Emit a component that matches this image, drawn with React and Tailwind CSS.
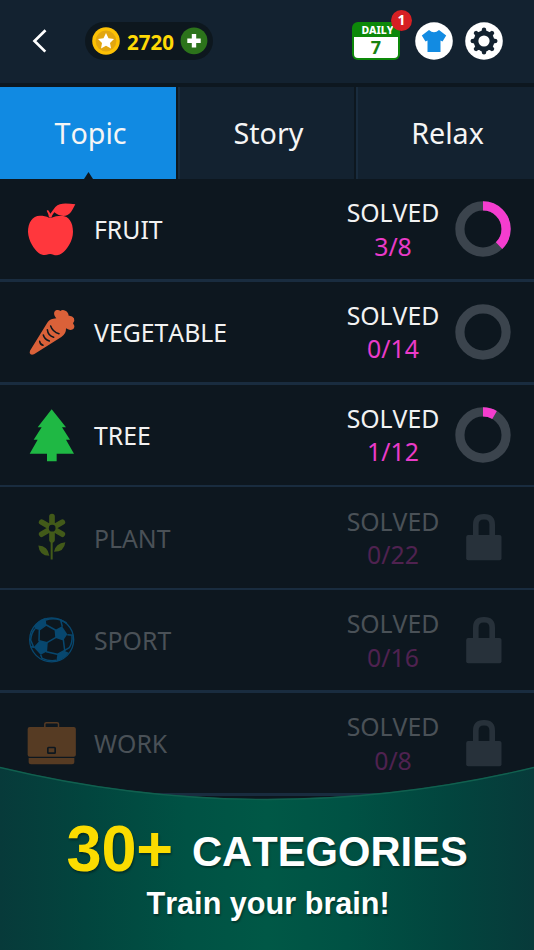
import { useState } from "react";

const tabs = ["Topic", "Story", "Relax"];

function Apple() {
  return (
    <svg viewBox="81 48 150 168" className="h-14 w-[50px]" fill="#ff373d">
      <path d="M147 98C139 93 130 92 120 92C97 92 84 113 84 141C85 168 103 194 116 204C126 212 138 211 145 208Q152 206 160 209C168 212 178 211 186 205C201 193 219 168 219 140C219 112 207 93 185 92C173 92 162 94 155 98Z" />
      <path d="M147 97Q146 87 140 77L144 75Q149 81 151 86Q160 74 166 66C180 51 203 55 226 58Q219 72 213 81C201 97 180 96 163 82Q157 89 154 98Z" />
    </svg>
  );
}

function Carrot() {
  return (
    <svg viewBox="81 357 150 168" className="h-14 w-[50px]">
      <path
        fill="#da6139"
        d="M90 497L140 416Q147 403 160 401L169 400C160 390 160 378 170 375Q178 374 181 378Q187 373 196 377Q205 381 206 392Q217 391 222 400Q225 408 219 415Q225 422 222 430Q215 438 204 433L198 430Q199 446 184 456L102 508Q92 512 89 504Z"
      />
      <g fill="none" stroke="#0d171f" strokeWidth="4.5" strokeLinecap="round">
        <path d="M152 423Q158 441 177 446" />
        <path d="M142 434Q144 452 161 457" />
        <path d="M130 450Q133 463 148 468" />
        <path d="M119 469Q120 478 129 481" />
      </g>
    </svg>
  );
}

function Tree() {
  return (
    <svg viewBox="81 65 150 168" className="h-14 w-[50px]" fill="#1fb844">
      <path d="M155 72L198 126H186L210 163H198L222 205H170V228H141V205H89L113 163H101L125 126H113Z" />
    </svg>
  );
}

function Plant() {
  return (
    <svg viewBox="81 373.5 150 168" className="h-14 w-[50px]">
      <g stroke="#92be12" strokeWidth="17" strokeLinecap="round">
        <path d="M156 396V466M125 413L187 449M187 413L125 449" />
      </g>
      <path d="M152 460H158V525H152Z" fill="#92be12" />
      <circle cx="156.5" cy="431" r="10" fill="#0d171f" />
      <path d="M115 483Q144 484 148 514Q118 514 115 483ZM196 473Q166 476 162 502Q193 502 196 473Z" fill="#92be12" />
    </svg>
  );
}

function Ball() {
  return (
    <svg viewBox="81 82 150 168" className="h-14 w-[50px]">
      <circle cx="155" cy="165.5" r="66" fill="none" stroke="#0090e6" strokeWidth="4" />
      <g fill="#0090e6">
        <path d="M103 125Q114 106 137 99L139 120L118 136L105 132Z" />
        <path d="M165 136L186 125L202 149L191 165L168 158Z" />
        <path d="M118 169L141 174L139 201L122 210L101 188Z" />
        <path d="M172 209L193 198L206 204Q194 222 169 231Z" />
      </g>
      <g fill="none" stroke="#0090e6" strokeWidth="4.5" strokeLinejoin="round">
        <path d="M118 136L139 121L166 136L168 158L141 174L117 168Z" />
        <path d="M168 158L190 165L194 197L172 209L139 201L141 174" />
        <path d="M137 106Q160 98 182 106L187 126M182 106L200 115" />
        <path d="M202 150L219 152M194 197L208 189Q218 174 216 153" />
        <path d="M105 132Q94 144 92 166L101 188L92 186" />
        <path d="M122 210L126 221Q148 231 169 227" />
      </g>
    </svg>
  );
}

function Briefcase() {
  return (
    <svg viewBox="81 390 150 168" className="h-14 w-[50px]">
      <path d="M134.5 428V417Q134.5 413 139 413H171Q175.5 413 175.5 417V428" fill="none" stroke="#c4712b" strokeWidth="4.5" />
      <rect x="83" y="426" width="144.5" height="89" rx="6" fill="#c4712b" />
      <path d="M86 519H223V531Q223 538 216 538H93Q86 538 86 531Z" fill="#c4712b" />
      <rect x="143.5" y="487.5" width="22" height="17" rx="2" fill="none" stroke="#0d171f" strokeWidth="5" />
    </svg>
  );
}

function Ring({ value }) {
  const length = 2 * Math.PI * 23.1;
  return (
    <svg viewBox="0 0 56 56" className="size-14">
      <circle cx="28" cy="28" r="23.1" fill="none" stroke="#3b444d" strokeWidth="9.2" />
      {value > 0 && (
        <circle
          cx="28"
          cy="28"
          r="23.1"
          fill="none"
          stroke="#f53dcf"
          strokeWidth="9.2"
          strokeDasharray={`${length * value} ${length}`}
          transform="rotate(-90 28 28)"
        />
      )}
    </svg>
  );
}

function Lock() {
  return (
    <svg viewBox="0 0 56 56" className="size-14">
      <path d="M20.8 27V15.6Q20.8 7.8 28.6 7.8H29.4Q37.2 7.8 37.2 15.6V27" fill="none" stroke="#27313a" strokeWidth="5.6" />
      <rect x="11.2" y="26" width="35.3" height="25.3" rx="2" fill="#27313a" />
    </svg>
  );
}

const categories = [
  { name: "FRUIT", solved: 3, total: 8, icon: Apple },
  { name: "VEGETABLE", solved: 0, total: 14, icon: Carrot },
  { name: "TREE", solved: 1, total: 12, icon: Tree },
  { name: "PLANT", solved: 0, total: 22, icon: Plant, locked: true },
  { name: "SPORT", solved: 0, total: 16, icon: Ball, locked: true },
  { name: "WORK", solved: 0, total: 8, icon: Briefcase, locked: true },
];

function Header() {
  return (
    <header className="flex h-[83px] items-center bg-[#132230] pr-[31px] pb-px pl-[32px]">
      <button className="h-6 w-4">
        <svg viewBox="0 0 16 24" className="h-6 w-4" fill="none" stroke="#fff" strokeWidth="2.7">
          <path d="M13.5 1.2L2.5 12L13.3 22.6" />
        </svg>
      </button>

      <div className="ml-[37px] flex h-[38px] w-32 items-center rounded-full bg-[#0d171e] pl-[7px]">
        <svg viewBox="0 0 28 28" className="size-7">
          <circle cx="14" cy="14" r="13.8" fill="#fdc105" />
          <circle cx="14" cy="14" r="10.4" fill="#e2a60f" />
          <path d="M14 6L16.5 11.2L22 12L18 15.9L19 21.4L14 18.8L9 21.4L10 15.9L6 12L11.5 11.2Z" fill="#fff" />
        </svg>
        <span className="mt-[2px] ml-[7px] w-[54px] text-[20.5px] leading-none font-bold text-[#ffd905]">2720</span>
        <svg viewBox="0 0 28 28" className="-ml-px size-7">
          <circle cx="14" cy="13.8" r="13.4" fill="#2c731b" />
          <path d="M14 7.1V20.5M7.3 13.8H20.7" stroke="#fff" strokeWidth="4.4" />
        </svg>
      </div>

      <div className="ml-auto flex items-center">
        <div className="relative flex h-[38px] w-12 flex-col rounded-[6px] bg-[#0d8809] p-[2px] text-center font-bold">
          <span className="h-[13px] pl-[3px] text-[10.5px] leading-[13px] font-extrabold text-white">DAILY</span>
          <span className="flex-1 rounded-b-[4px] bg-white text-[18px] leading-[21px] text-[#17820f]">7</span>
          <span className="absolute -top-[12px] -right-[12px] size-[21px] rounded-full bg-[#d62023] text-[14px] leading-[20px] text-white">
            1
          </span>
        </div>
        <svg viewBox="0 0 38 38" className="ml-[15px] size-[38px]">
          <circle cx="19" cy="19" r="18.8" fill="#fff" />
          <path d="M14 8Q19 12.5 24 8L31.2 13.6L27.5 19.5L25.5 18.5V30H12.5V18.5L10.5 19.5L6.8 13.6Z" fill="#128be2" />
        </svg>
        <svg viewBox="0 0 38 38" className="ml-3 size-[38px]">
          <circle cx="19" cy="19" r="18.8" fill="#fff" />
          <g fill="#132230">
            <circle cx="19" cy="19" r="10.4" />
            {[0, 45, 90, 135].map((angle) => (
              <path key={angle} d="M17.2 6.2Q19 4.7 20.8 6.2L21.8 10V28L20.8 31.8Q19 33.3 17.2 31.8L16.2 28V10Z" transform={`rotate(${angle} 19 19)`} />
            ))}
          </g>
          <circle cx="19" cy="19" r="5.6" fill="#fff" />
        </svg>
      </div>
    </header>
  );
}

function CategoryRow({ category }) {
  const { name, solved, total, icon: Icon, locked } = category;
  return (
    <li className="flex h-[102.8px] flex-col">
      <div className="flex flex-1 items-center pr-[23px] pl-[27px]">
        <div className={locked ? "opacity-40" : ""}>
          <Icon />
        </div>
        <p className={`mt-px ml-[17px] text-[24.8px] leading-none ${locked ? "text-[#4a5157]" : "text-[#f2f2f2]"}`}>{name}</p>
        <div className="mt-px ml-auto w-[100px] text-center text-[24.8px] leading-[33.4px]">
          <p className={locked ? "text-[#4a5157]" : "text-[#f2f2f2]"}>SOLVED</p>
          <p className={locked ? "text-[#4f2250]" : "text-[#ea3bc9]"}>
            {solved}/{total}
          </p>
        </div>
        <div className="ml-3">{locked ? <Lock /> : <Ring value={solved / total} />}</div>
      </div>
      <div className="h-[2.6px] bg-[#192c3f]" />
    </li>
  );
}

function Banner() {
  return (
    <div className="absolute inset-x-0 bottom-0 h-[184px] font-['Liberation_Sans',Arial,sans-serif] font-bold text-white">
      <svg viewBox="0 0 534 184" className="absolute inset-0 h-full w-full">
        <defs>
          <linearGradient id="banner">
            <stop offset="0" stopColor="#073a3a" />
            <stop offset="0.16" stopColor="#02453e" />
            <stop offset="0.35" stopColor="#005244" />
            <stop offset="0.5" stopColor="#005846" />
            <stop offset="0.65" stopColor="#005244" />
            <stop offset="0.84" stopColor="#02453e" />
            <stop offset="1" stopColor="#073a3a" />
          </linearGradient>
        </defs>
        <path d="M0 1Q267 65 534 1V184H0Z" fill="url(#banner)" />
        <path d="M0 1.5Q267 65.5 534 1.5" fill="none" stroke="#11604f" strokeWidth="1.3" />
      </svg>
      <div className="relative flex flex-col items-center pt-12 [text-shadow:1px_2px_2px_rgba(0,0,0,0.35)]">
        <p className="flex items-center pl-[7px] leading-[64px]">
          <span className="origin-right scale-x-[0.985] text-[64px] tracking-[-0.2px] text-[#fbdc00]">30+</span>
          <span className="mt-[5px] ml-[19px] origin-left scale-x-[0.97] text-[43px]">CATEGORIES</span>
        </p>
        <p className="mt-[2px] scale-x-[0.972] pl-[2px] text-[31.5px] leading-[36px]">Train your brain!</p>
      </div>
    </div>
  );
}

export default function App() {
  const [active, setActive] = useState("Topic");

  return (
    <div className="relative h-[950px] w-[534px] overflow-hidden bg-[#0d171f] font-['Noto_Sans',sans-serif] [font-kerning:none]">
      <Header />

      <nav className="mt-1 grid h-[92px] grid-cols-[176px_176px_1fr] gap-[2px]">
        {tabs.map((tab) => (
          <button
            key={tab}
            onClick={() => setActive(tab)}
            className={`relative text-[28.7px] text-[#f5f5f5] ${
              tab === active ? "bg-[#118ae2] pl-[5px]" : "border-l-2 border-[#192c3e] bg-[#132230] pl-[3px]"
            }`}
          >
            {tab}
            {tab === active && (
              <span className="absolute bottom-0 left-[84px] h-[7px] w-[9px] bg-[#0d171f] [clip-path:polygon(50%_0,100%_100%,0_100%)]" />
            )}
          </button>
        ))}
      </nav>

      <ul>
        {categories.map((category) => (
          <CategoryRow key={category.name} category={category} />
        ))}
      </ul>

      <Banner />
    </div>
  );
}
